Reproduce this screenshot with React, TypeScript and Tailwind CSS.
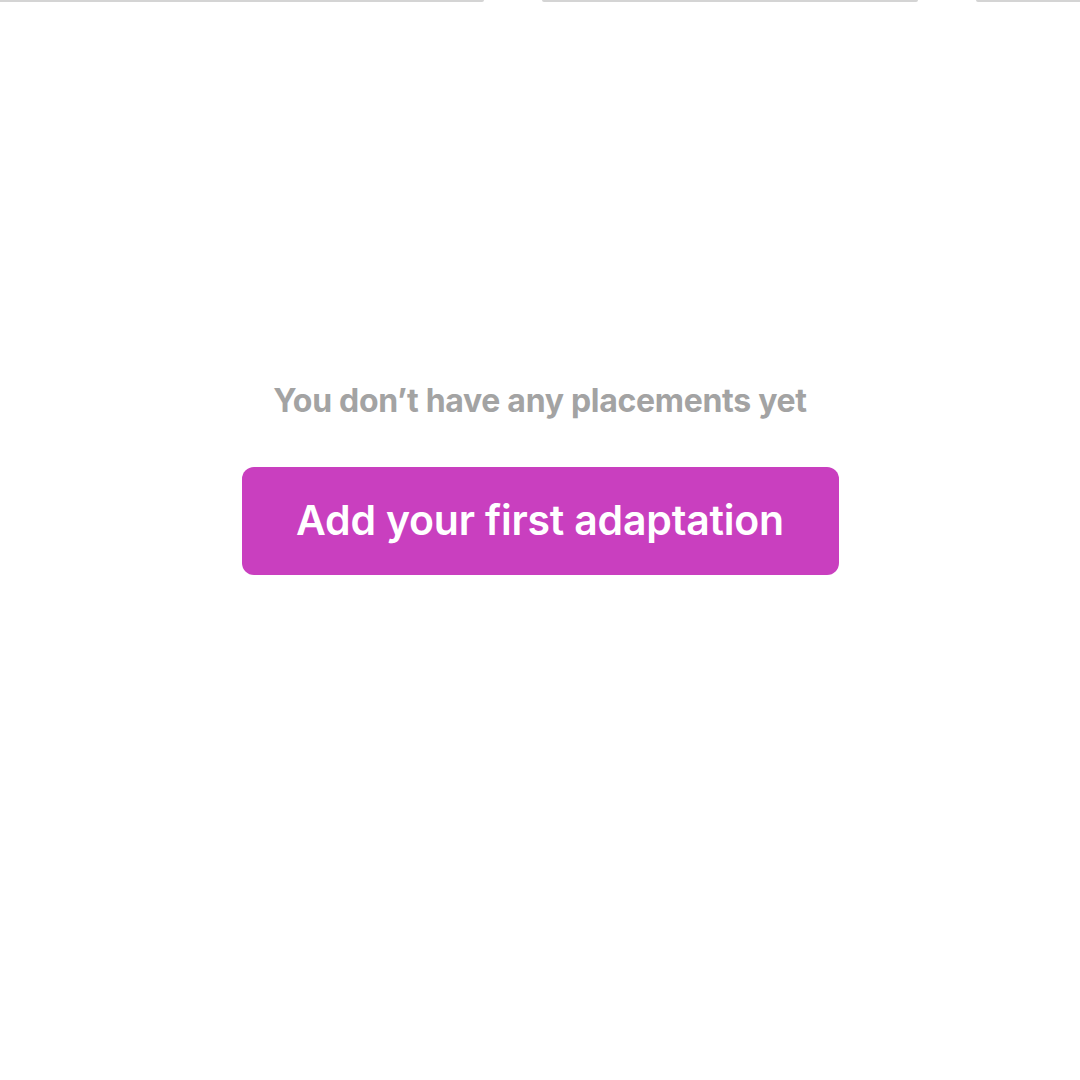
export default function App() {
  return (
    <div className="relative h-[1080px] w-[1080px] overflow-hidden bg-white font-['Inter',sans-serif]">
      <div className="flex h-[2px]">
        <div className="h-[2px] w-[484px] rounded-br-md bg-[#d4d4d4]" />
        <div className="ml-[58px] h-[2px] w-[376px] rounded-b-md bg-[#d4d4d4]" />
        <div className="ml-[58px] h-[2px] flex-1 rounded-bl-md bg-[#d4d4d4]" />
      </div>
      <div className="flex flex-col items-center pt-[379px]">
        <p className="text-[32px] font-bold leading-[40px] tracking-[-0.3px] text-[#a3a3a3]">
          You don’t have any placements yet
        </p>
        <button
          type="button"
          className="mt-[46px] h-[108px] w-[597px] rounded-xl bg-[#c93fbf] text-[41px] font-semibold tracking-[-0.2px] text-white"
        >
          Add your first adaptation
        </button>
      </div>
    </div>
  )
}
